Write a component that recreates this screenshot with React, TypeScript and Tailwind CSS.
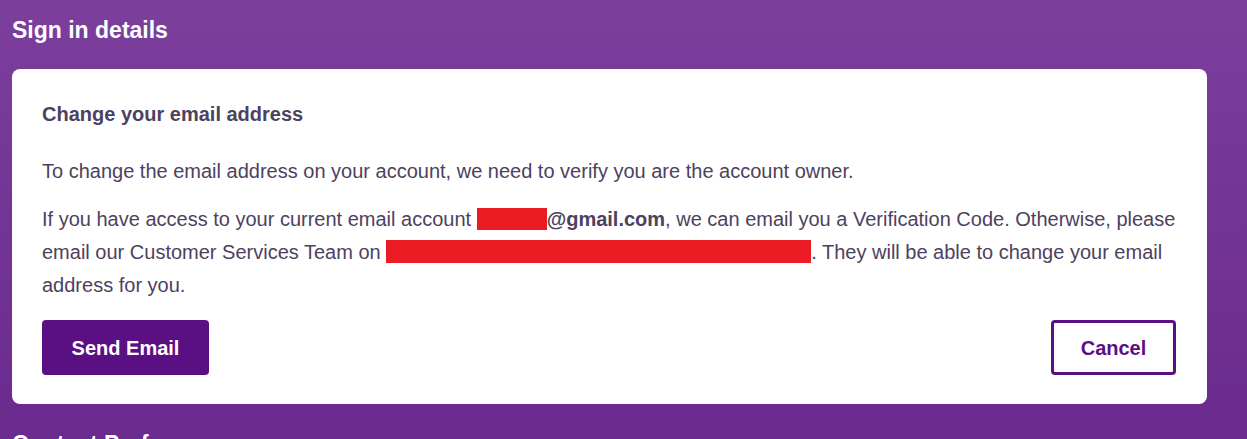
const FONT = "font-['Liberation_Sans',Arial,sans-serif]";

export default function App() {
  return (
    <div
      className={`${FONT} h-[439px] w-full overflow-hidden bg-gradient-to-b from-[#7c3f9c] to-[#6a2a8e] pl-3 pr-10 pt-[15px]`}
    >
      <h2 className="h-[30px] text-[23px] font-bold leading-[30px] text-white">
        Sign in details
      </h2>

      <section className="mt-[24px] rounded-[8px] bg-white pl-[30px] pr-[31px] pb-[29px] pt-[31px] text-[#4e4160]">
        <h3 className="text-[20px] font-bold leading-[28px]">
          Change your email address
        </h3>
        <p className="mt-[27px] text-[20px] leading-[33px]">
          To change the email address on your account, we need to verify you
          are the account owner.
        </p>
        <p className="mt-[15px] text-[20px] leading-[33px]">
          If you have access to your current email account{" "}
          <span className="inline-block h-[22px] w-[70px] translate-y-[4px] bg-[#ec1c24] align-baseline" />
          <b>@gmail.com</b>, we can email you a Verification Code. Otherwise,
          please email our Customer Services Team on{" "}
          <span className="inline-block h-[23px] w-[425px] translate-y-[4px] bg-[#ec1c24] align-baseline" />
          . They will be able to change your email address for you.
        </p>

        <div className="mt-[18px] flex items-center justify-between">
          <button className="h-[55px] w-[167px] rounded-[4px] bg-[#5a1082] text-[20px] font-bold text-white">
            Send Email
          </button>
          <button className="h-[55px] w-[125px] rounded-[4px] border-[3px] border-[#5a1082] bg-white text-[20px] font-bold text-[#5a1082]">
            Cancel
          </button>
        </div>
      </section>

      <h2 className="mt-[25px] text-[23px] font-bold leading-[30px] text-white">
        Contact Preferences
      </h2>
    </div>
  );
}
